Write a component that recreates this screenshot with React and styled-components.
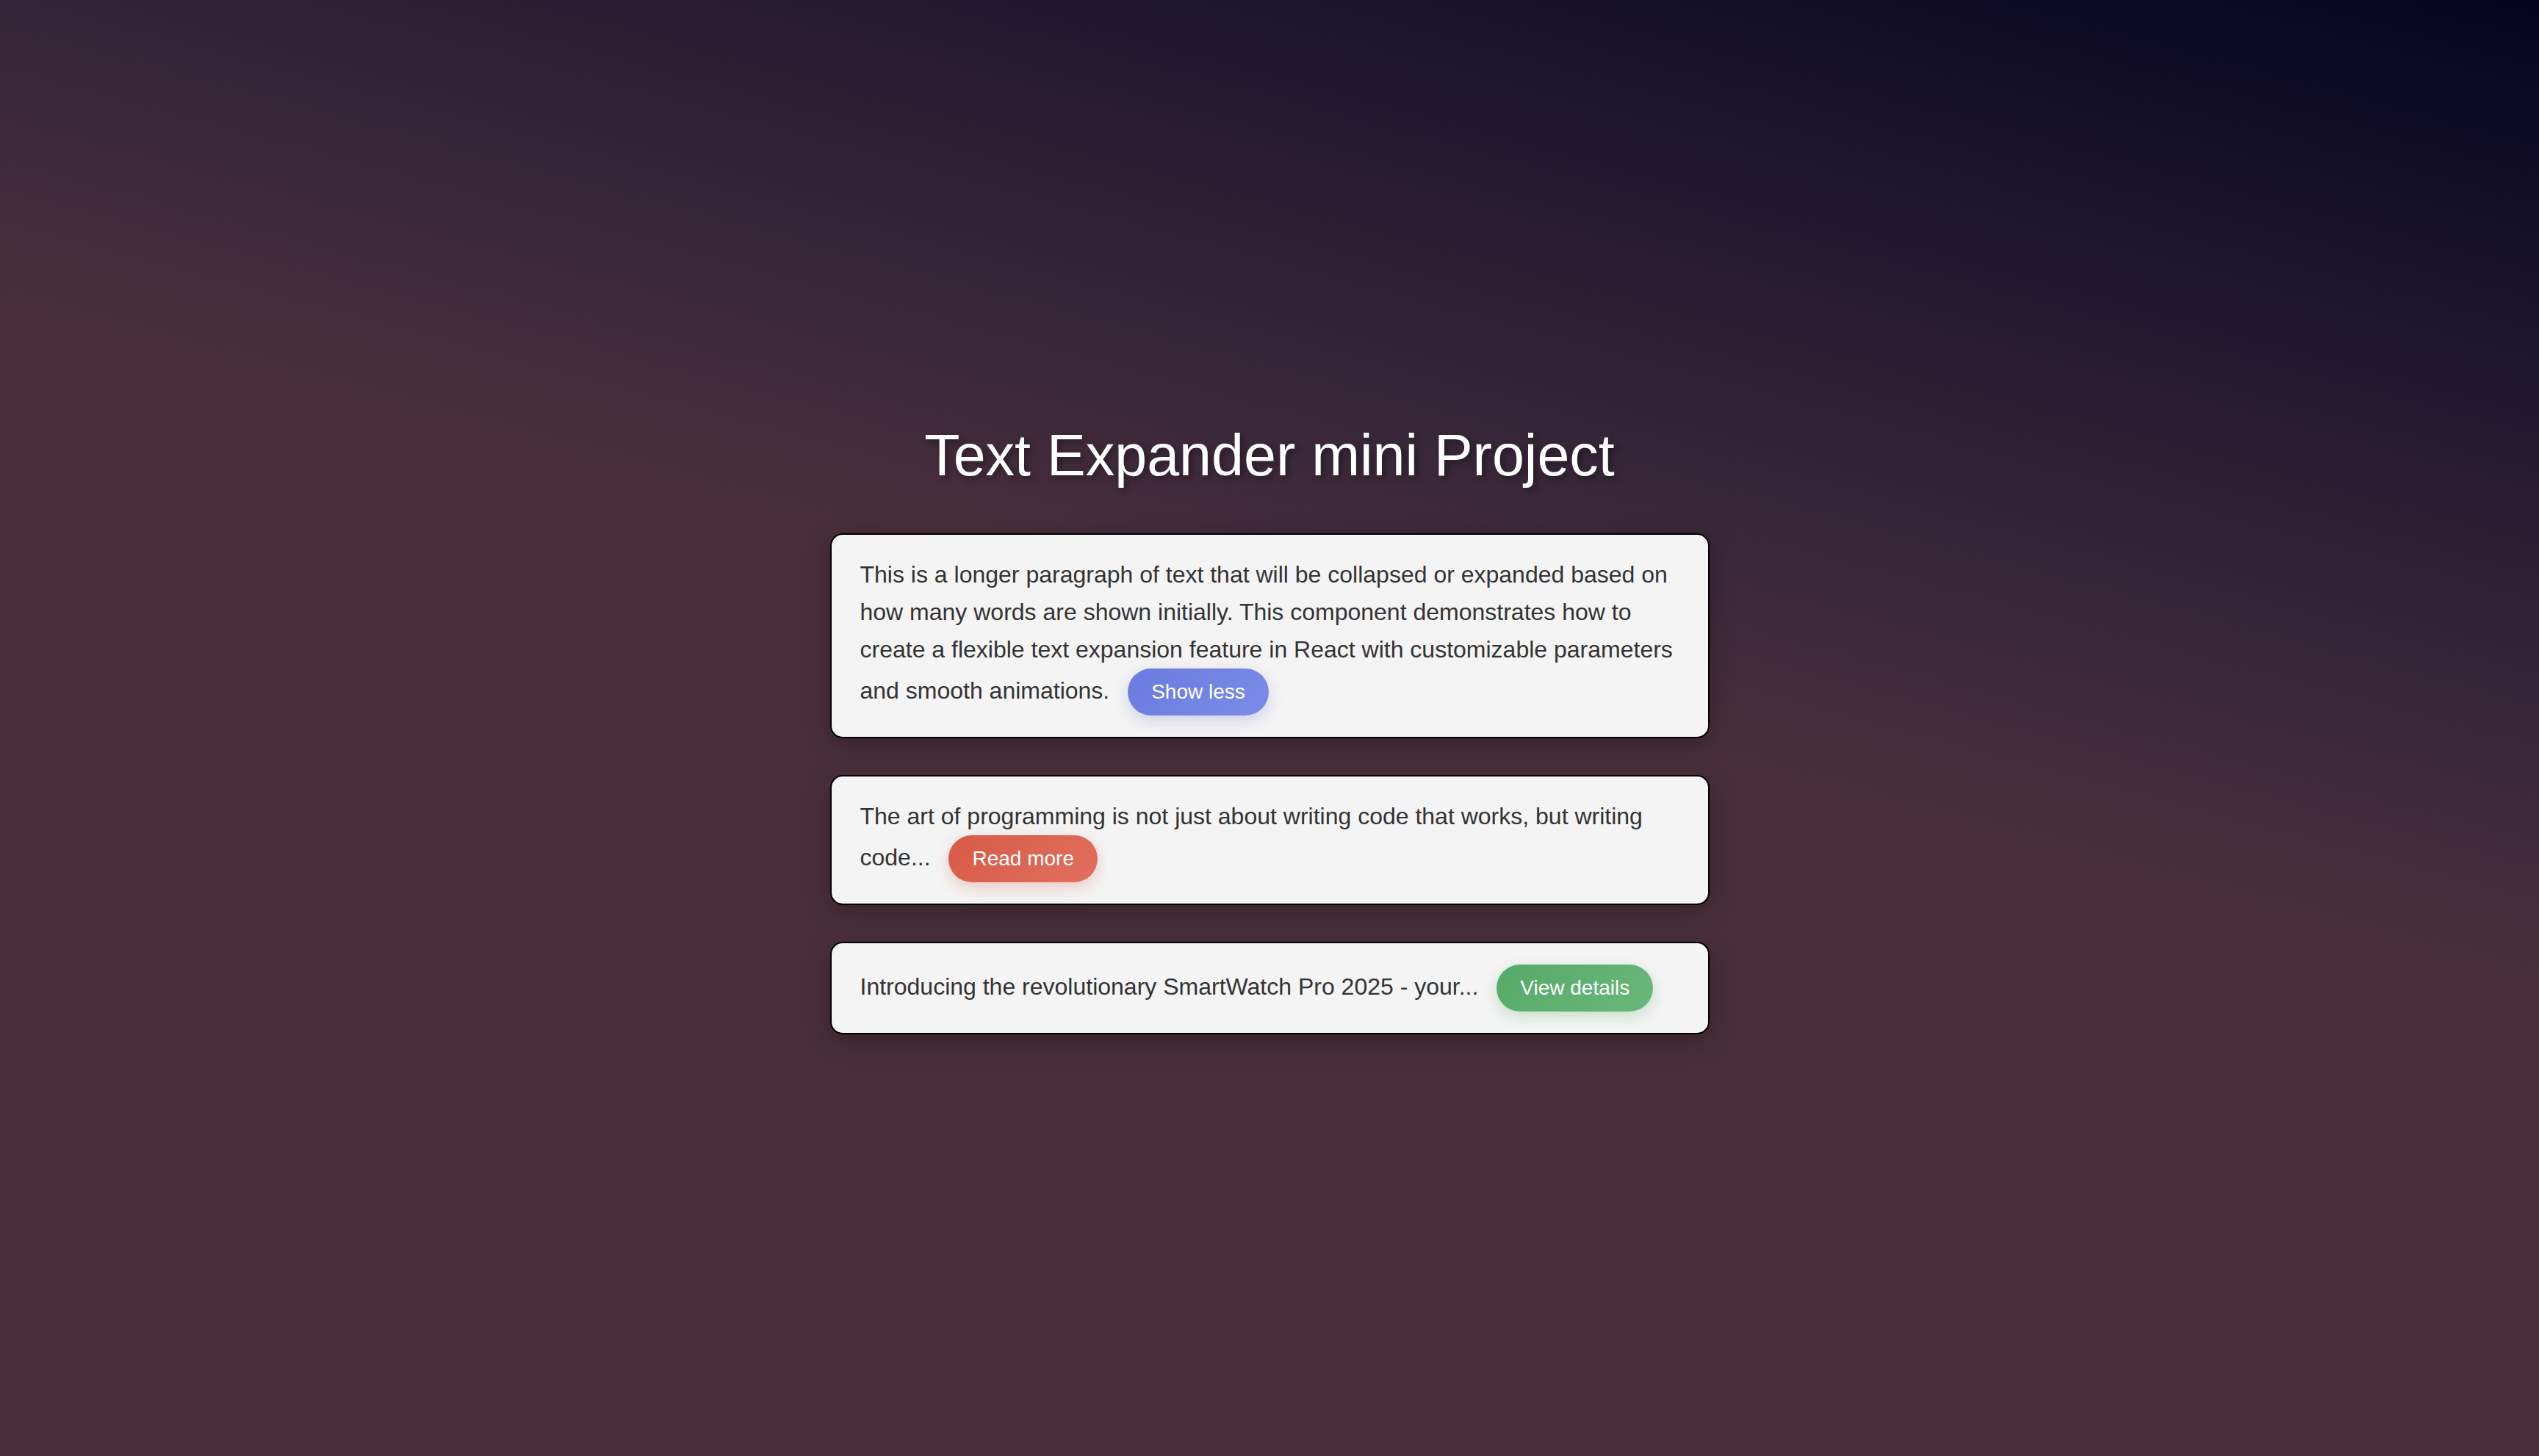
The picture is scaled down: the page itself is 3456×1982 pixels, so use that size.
import styled, { createGlobalStyle } from "styled-components";
import { useState } from "react";

const GlobalStyle = createGlobalStyle`
  * {
    box-sizing: border-box;
  }
  html,
  body {
    margin: 0;
    padding: 0;
  }
  body {
    font-family: "Liberation Sans", Arial, Helvetica, sans-serif;
    background: #4a2f3b;
  }
`;

// 페이지 전체 배경
const Page = styled.div`
  min-height: 100vh;
  display: flex;
  flex-direction: column;
  align-items: center;
  justify-content: center;
  background: linear-gradient(195deg, #050522 0%, #342538 32%, #4a2f3b 46%, #4a2f3b 100%);
`;

const Title = styled.h1`
  margin: 0 0 60px;
  font-size: 79px;
  font-weight: 400;
  line-height: normal;
  color: #ffffff;
  text-shadow: 4px 4px 9px rgba(0, 0, 0, 0.35);
`;

const Card = styled.div`
  width: 1197px;
  padding: 29px 39px;
  margin-bottom: ${(props) => (props.$last ? "0" : "50px")};
  background-color: #f4f4f4;
  border: 2px solid #000;
  border-radius: 17px;
  box-shadow: 0 9px 33px rgba(0, 0, 0, 0.28);
`;

const Paragraph = styled.p`
  margin: 0;
  font-size: 32px;
  line-height: 51px;
  color: #333333;
`;

// 버튼 색은 props로 받는다
const ToggleBtn = styled.button`
  display: inline-block;
  margin-left: 16px;
  padding: 16px 32px;
  border: none;
  border-radius: 999px;
  font-family: inherit;
  font-size: 28px;
  line-height: normal;
  color: #ffffff;
  cursor: pointer;
  background: linear-gradient(135deg, ${(props) => props.$from}, ${(props) => props.$to});
  box-shadow: 0 7px 20px ${(props) => props.$glow};
`;

const colors = {
  blue: { from: "#6a7be0", to: "#7b8ce7", glow: "rgba(106, 123, 224, 0.28)" },
  red: { from: "#d75a47", to: "#e1705f", glow: "rgba(215, 90, 71, 0.28)" },
  green: { from: "#56aa68", to: "#68b87b", glow: "rgba(86, 170, 104, 0.28)" },
};

function TextExpander({ text, words, expanded, moreLabel, lessLabel, color, last }) {
  const [open, setOpen] = useState(expanded);
  const list = text.split(" ");
  const shown = open ? text : list.slice(0, words).join(" ") + "...";
  const c = colors[color];
  return (
    <Card $last={last}>
      <Paragraph>
        {shown}{" "}
        <ToggleBtn $from={c.from} $to={c.to} $glow={c.glow} onClick={() => setOpen(!open)}>
          {open ? lessLabel : moreLabel}
        </ToggleBtn>
      </Paragraph>
    </Card>
  );
}

export default function App() {
  return (
    <>
      <GlobalStyle />
      <Page>
        <Title>Text Expander mini Project</Title>
        <TextExpander
          text="This is a longer paragraph of text that will be collapsed or expanded based on how many words are shown initially. This component demonstrates how to create a flexible text expansion feature in React with customizable parameters and smooth animations."
          words={10}
          expanded={true}
          moreLabel="Show more"
          lessLabel="Show less"
          color="blue"
        />
        <TextExpander
          text="The art of programming is not just about writing code that works, but writing code that is clean, readable and easy for others to understand."
          words={15}
          expanded={false}
          moreLabel="Read more"
          lessLabel="Read less"
          color="red"
        />
        <TextExpander
          text="Introducing the revolutionary SmartWatch Pro 2025 - your perfect companion for health, fitness and everyday life."
          words={8}
          expanded={false}
          moreLabel="View details"
          lessLabel="Hide details"
          color="green"
          last
        />
      </Page>
    </>
  );
}
